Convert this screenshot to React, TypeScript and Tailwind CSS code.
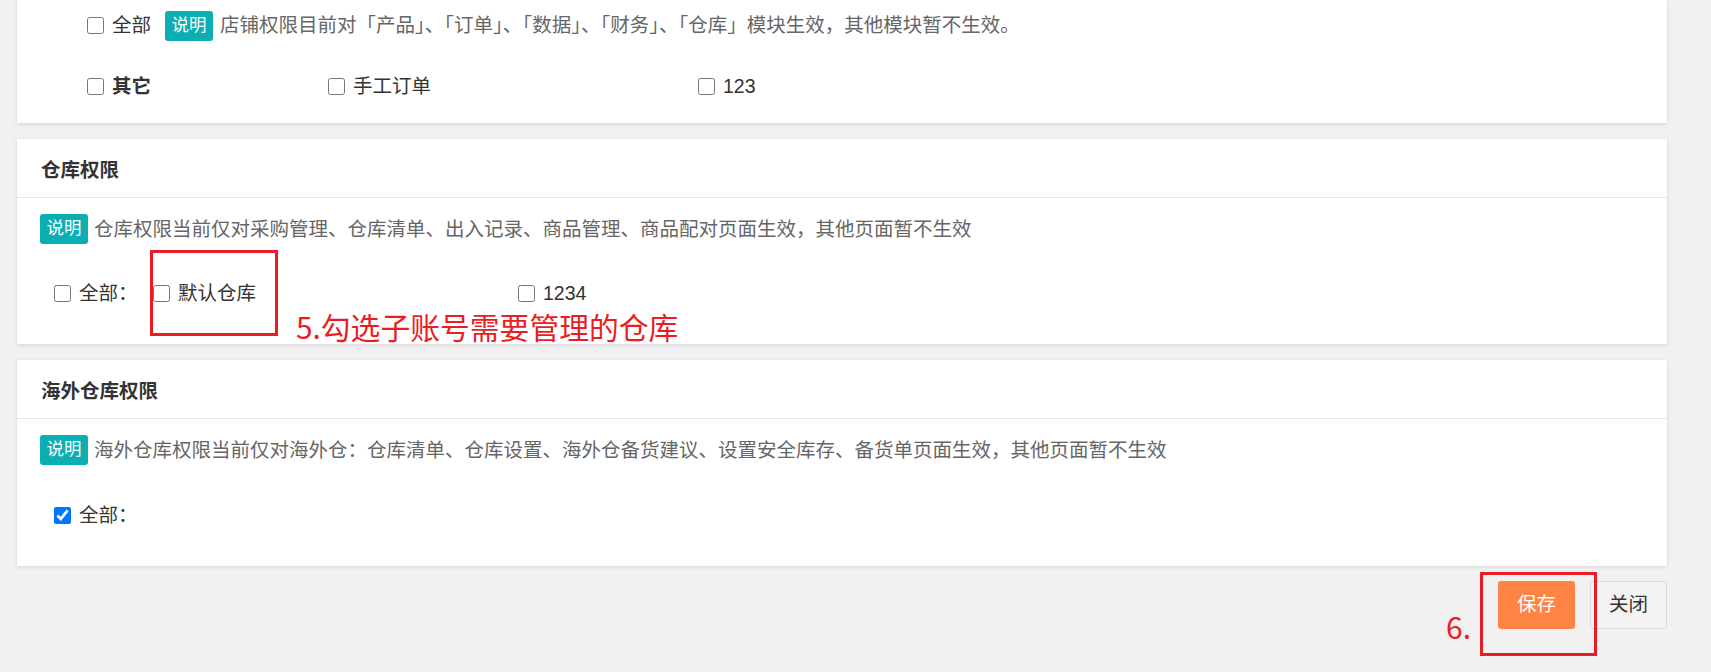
import React from "react";

const H = ({ children }: { children: React.ReactNode }) => (
  <span className="[font-feature-settings:'halt']">{children}</span>
);

const Badge = () => (
  <span className="inline-flex h-[30px] shrink-0 items-center rounded-[3px] bg-[#0aaeb3] px-[6.5px] text-[17.5px] leading-none text-white">
    说明
  </span>
);

const Check = ({ checked = false }: { checked?: boolean }) => (
  <input
    type="checkbox"
    defaultChecked={checked}
    className="m-0 h-[17px] w-[17px] shrink-0 accent-[#0075ff]"
  />
);

const Card = ({ children }: { children: React.ReactNode }) => (
  <div className="bg-white shadow-[0_1px_4px_rgba(0,0,0,0.12)]">{children}</div>
);

export default function App() {
  return (
    <div className="relative min-h-screen bg-[#f1f1f1] pl-[17px] pr-[44px] font-['Liberation_Sans','Noto_Sans_CJK_SC',sans-serif] text-[19.5px] text-[#333]">
      {/* Card 1 (scrolled, top cut) */}
      <Card>
        <div className="pb-[22px] pl-[70px] pt-[10px]">
          <div className="flex h-[30px] items-center leading-[30px]">
            <Check />
            <span className="ml-[8px]">全部</span>
            <span className="ml-[14px]">
              <Badge />
            </span>
            <span className="ml-[7px] text-[#666]">
              店铺权限目前对「产品<H>」</H>、<H>「</H>订单<H>」</H>、<H>「</H>数据<H>」</H>、<H>「</H>财务<H>」</H>、<H>「</H>仓库」模块生效，其他模块暂不生效。
            </span>
          </div>
          <div className="mt-[31px] flex h-[30px] items-center leading-[30px]">
            <div className="flex w-[241px] items-center">
              <Check />
              <span className="ml-[8px] font-bold">其它</span>
            </div>
            <div className="flex w-[370px] items-center">
              <Check />
              <span className="ml-[8px]">手工订单</span>
            </div>
            <div className="flex items-center">
              <Check />
              <span className="ml-[8px]">123</span>
            </div>
          </div>
        </div>
      </Card>

      {/* Card 2 */}
      <div className="mt-[16px]">
        <Card>
          <div className="flex h-[59px] items-center border-b border-[#e6e6e6] pl-[24px] pt-[5px] font-bold">
            仓库权限
          </div>
          <div className="pb-[36px] pl-[23px] pt-[16px]">
            <div className="flex h-[30px] items-center leading-[30px]">
              <Badge />
              <span className="ml-[6px] text-[#666]">
                仓库权限当前仅对采购管理、仓库清单、出入记录、商品管理、商品配对页面生效，其他页面暂不生效
              </span>
            </div>
            <div className="mt-[34px] flex h-[30px] items-center pl-[14px] leading-[30px]">
              <div className="flex w-[99px] items-center">
                <Check />
                <span className="ml-[8px]">全部：</span>
              </div>
              <div className="flex w-[365px] items-center">
                <Check />
                <span className="ml-[8px]">默认仓库</span>
              </div>
              <div className="flex items-center">
                <Check />
                <span className="ml-[8px]">1234</span>
              </div>
            </div>
          </div>
        </Card>
      </div>

      {/* Card 3 */}
      <div className="mt-[16px]">
        <Card>
          <div className="flex h-[59px] items-center border-b border-[#e6e6e6] pl-[24px] pt-[5px] font-bold">
            海外仓库权限
          </div>
          <div className="pb-[36px] pl-[23px] pt-[16px]">
            <div className="flex h-[30px] items-center leading-[30px]">
              <Badge />
              <span className="ml-[6px] text-[#666]">
                海外仓库权限当前仅对海外仓：仓库清单、仓库设置、海外仓备货建议、设置安全库存、备货单页面生效，其他页面暂不生效
              </span>
            </div>
            <div className="mt-[35px] flex h-[30px] items-center pl-[14px] leading-[30px]">
              <div className="flex items-center">
                <Check checked />
                <span className="ml-[8px]">全部：</span>
              </div>
            </div>
          </div>
        </Card>
      </div>

      {/* Buttons */}
      <div className="mt-[15px] flex justify-end gap-[15px]">
        <button className="h-[48px] w-[77px] rounded-[3px] bg-[#ff8444] text-[19.5px] text-white">
          保存
        </button>
        <button className="h-[48px] w-[77px] rounded-[3px] border border-[#dcdcdc] bg-[#f3f3f3] text-[19.5px] text-[#333]">
          关闭
        </button>
      </div>

      {/* Annotations */}
      <div className="pointer-events-none absolute left-[150px] top-[250px] h-[86px] w-[128px] border-[3px] border-[#ec1c24]" />
      <div className="pointer-events-none absolute left-[296px] top-[309px] whitespace-nowrap font-['Noto_Sans_CJK_SC',sans-serif] text-[29.8px] leading-[34px] text-[#ec1c24]">
        5.勾选子账号需要管理的仓库
      </div>
      <div className="pointer-events-none absolute left-[1446px] top-[609px] font-['Noto_Sans_CJK_SC',sans-serif] text-[30px] leading-[34px] text-[#ec1c24]">
        6.
      </div>
      <div className="pointer-events-none absolute left-[1480px] top-[572px] h-[84px] w-[117px] border-[3px] border-[#ec1c24]" />
    </div>
  );
}
